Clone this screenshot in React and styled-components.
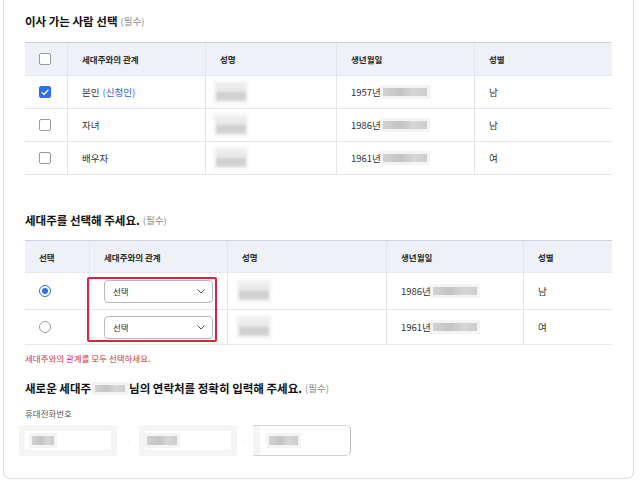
import React from "react";
import styled, { createGlobalStyle } from "styled-components";

const GlobalStyle = createGlobalStyle`
  html, body {
    margin: 0;
    padding: 0;
    background: #ffffff;
  }
  body {
    font-family: "Noto Sans CJK KR", "Noto Sans", sans-serif;
    color: #333;
  }
`;

const movers = [
  { relation: "본인", applicant: true, year: "1957년", gender: "남", checked: true },
  { relation: "자녀", year: "1986년", gender: "남" },
  { relation: "배우자", year: "1961년", gender: "여" },
];

const heads = [
  { year: "1986년", gender: "남", selected: true },
  { year: "1961년", gender: "여" },
];

const Page = styled.div`
  padding: 0 10px 3px 3px;
`;

const Card = styled.section`
  border: 1px solid #dcdcdc;
  border-top: none;
  border-radius: 0 0 7px 7px;
  padding: 12px 21px 22px 21px;
`;

const Title = styled.h2`
  margin: 0;
  display: flex;
  align-items: center;
  font-size: 11.5px;
  line-height: 18px;
  font-weight: 700;
  color: #111;
`;

const Required = styled.span`
  margin-left: 3px;
  font-size: 9.5px;
  font-weight: 400;
  color: #8a8a8a;
`;

const Table = styled.div`
  display: grid;
  grid-template-columns: ${(p) => p.$cols};
  grid-template-rows: ${(p) => p.$rows};
  width: 587px;
  margin-top: ${(p) => p.$top}px;
  border-top: 1px solid #cdd3db;
`;

const Cell = styled.div`
  display: flex;
  align-items: center;
  padding: 0 14px;
  font-size: ${(p) => (p.$head ? "8.5px" : "9.5px")};
  font-weight: ${(p) => (p.$head ? 700 : 400)};
  color: ${(p) => (p.$head ? "#2b2b2b" : "#333")};
  background: ${(p) => (p.$head ? "#eef1f6" : "#fff")};
  border-bottom: 1px solid #e3e6ea;
  border-left: ${(p) => (p.$first ? "none" : "1px solid #e3e6ea")};
  white-space: nowrap;
  grid-row: ${(p) => p.$row};
  grid-column: ${(p) => p.$col};
`;

const Applicant = styled.span`
  margin-left: 3px;
  color: #2d6bc9;
`;

const Check = styled.span`
  box-sizing: border-box;
  width: 12px;
  height: 12px;
  border-radius: 2px;
  border: 1px solid ${(p) => (p.$on ? "#2f6fe0" : "#9a9a9a")};
  background: ${(p) => (p.$on ? "#2f6fe0" : "#fff")};
  display: flex;
  align-items: center;
  justify-content: center;
`;

const Radio = styled.span`
  box-sizing: border-box;
  width: 12px;
  height: 12px;
  border-radius: 50%;
  border: 1px solid ${(p) => (p.$on ? "#2f6fe0" : "#9a9a9a")};
  background: #fff;
  display: flex;
  align-items: center;
  justify-content: center;
  &::after {
    content: "";
    display: ${(p) => (p.$on ? "block" : "none")};
    width: 6px;
    height: 6px;
    border-radius: 50%;
    background: #2f6fe0;
  }
`;

const Blur = styled.span`
  display: inline-block;
  width: ${(p) => p.$w}px;
  height: ${(p) => p.$h}px;
  background: linear-gradient(180deg, #f0f0f0 0%, #e6e6e6 45%, #cdcdcd 60%, #d8d8d8 100%);
  box-shadow: 0 0 0 3px #f7f7f7;
  filter: blur(0.8px);
`;

const Bar = styled.span`
  display: inline-block;
  flex-shrink: 0;
  width: ${(p) => p.$w}px;
  height: ${(p) => p.$h || 8}px;
  margin: 0 ${(p) => p.$mr || 0}px 0 ${(p) => p.$ml || 0}px;
  background: linear-gradient(90deg, #d2d2d2, #c4c4c4 40%, #d6d6d6 70%, #cdcdcd);
  box-shadow: 0 0 0 3px #f4f4f4;
  filter: blur(0.6px);
`;

const Select = styled.div`
  box-sizing: border-box;
  width: 111px;
  height: 23px;
  border: 1px solid #b9b9b9;
  border-radius: 4px;
  background: #fff;
  display: flex;
  align-items: center;
  justify-content: space-between;
  padding: 0 7px 0 8px;
  font-size: 8.5px;
  font-weight: 400;
  color: #333;
`;

const Highlight = styled.div`
  grid-column: 2;
  grid-row: 2 / span 2;
  margin: 4px 10px 3px -2px;
  border: 2px solid #d5263b;
  border-radius: 2px;
  pointer-events: none;
  z-index: 1;
`;

const ErrorText = styled.p`
  margin: 6px 0 0;
  font-size: 8.5px;
  line-height: 14px;
  color: #cf3349;
`;

const Label = styled.div`
  margin-top: 9px;
  font-size: 8.5px;
  line-height: 14px;
  color: #555;
`;

const PhoneRow = styled.div`
  display: flex;
  align-items: center;
  margin: 5px 0 0 -6px;
`;

const Field = styled.div`
  box-sizing: border-box;
  width: 98px;
  height: 31px;
  display: flex;
  align-items: center;
  padding-left: ${(p) => p.$pad}px;
  background: #fff;
  border: 6px solid #f5f5f5;
  border-radius: 2px;
  ${(p) =>
    p.$edge &&
    `
    border: 1px solid #f5f5f5;
    border-right-color: #bdbdbd;
    border-top-color: #d4d4d4;
    border-bottom-color: #d4d4d4;
    border-radius: 0 5px 5px 0;
    box-shadow: inset 6px 0 0 #f5f5f5;
  `}
`;

const Dash = styled.span`
  width: ${(p) => p.$w}px;
  text-align: center;
  font-size: 9px;
  color: #e2e2e2;
`;

const Spacer = styled.div`
  height: ${(p) => p.$h}px;
`;

const Chevron = () => (
  <svg width="8" height="5" viewBox="0 0 8 5" fill="none">
    <path d="M0.8 0.8L4 4L7.2 0.8" stroke="#555" strokeWidth="1" strokeLinecap="round" strokeLinejoin="round" />
  </svg>
);

const Tick = () => (
  <svg width="8" height="7" viewBox="0 0 8 7" fill="none">
    <path d="M1 3.6L3 5.5L7 1.2" stroke="#fff" strokeWidth="1.3" strokeLinecap="round" strokeLinejoin="round" />
  </svg>
);

export default function App() {
  return (
    <Page>
      <GlobalStyle />
      <Card>
        <Title>
          이사 가는 사람 선택<Required>(필수)</Required>
        </Title>
        <Table $cols="42px 138px 131px 138px 138px" $rows="33px repeat(3, 33px)" $top={12}>
          <Cell $head $first $row={1} $col={1}>
            <Check />
          </Cell>
          <Cell $head $row={1} $col={2}>세대주와의 관계</Cell>
          <Cell $head $row={1} $col={3}>성명</Cell>
          <Cell $head $row={1} $col={4}>생년월일</Cell>
          <Cell $head $row={1} $col={5}>성별</Cell>
          {movers.map((m, i) => (
            <React.Fragment key={m.relation}>
              <Cell $first $row={i + 2} $col={1}>
                <Check $on={m.checked}>{m.checked && <Tick />}</Check>
              </Cell>
              <Cell $row={i + 2} $col={2}>
                {m.relation}
                {m.applicant && <Applicant>(신청인)</Applicant>}
              </Cell>
              <Cell $row={i + 2} $col={3} style={{ paddingLeft: 10 }}>
                <Blur $w={30} $h={18} />
              </Cell>
              <Cell $row={i + 2} $col={4}>
                {m.year}
                <Bar $w={44} $ml={2} />
              </Cell>
              <Cell $row={i + 2} $col={5}>{m.gender}</Cell>
            </React.Fragment>
          ))}
        </Table>

        <Spacer $h={36} />
        <Title>
          세대주를 선택해 주세요.<Required>(필수)</Required>
        </Title>
        <Table $cols="64px 138px 159px 137px 89px" $rows="32px 37px 35px" $top={11}>
          <Cell $head $first $row={1} $col={1}>선택</Cell>
          <Cell $head $row={1} $col={2}>세대주와의 관계</Cell>
          <Cell $head $row={1} $col={3}>성명</Cell>
          <Cell $head $row={1} $col={4}>생년월일</Cell>
          <Cell $head $row={1} $col={5}>성별</Cell>
          {heads.map((h, i) => (
            <React.Fragment key={h.year}>
              <Cell $first $row={i + 2} $col={1}>
                <Radio $on={h.selected} />
              </Cell>
              <Cell $row={i + 2} $col={2}>
                <Select>
                  선택
                  <Chevron />
                </Select>
              </Cell>
              <Cell $row={i + 2} $col={3} style={{ paddingLeft: 11 }}>
                <Blur $w={30} $h={18} />
              </Cell>
              <Cell $row={i + 2} $col={4}>
                {h.year}
                <Bar $w={44} $ml={2} />
              </Cell>
              <Cell $row={i + 2} $col={5}>{h.gender}</Cell>
            </React.Fragment>
          ))}
          <Highlight />
        </Table>
        <ErrorText>세대주와의 관계를 모두 선택하세요.</ErrorText>

        <Spacer $h={14} />
        <Title>
          새로운 세대주<Bar $w={30} $h={7} $ml={4} $mr={4} />님의 연락처를 정확히 입력해 주세요.
          <Required>(필수)</Required>
        </Title>
        <Label>휴대전화번호</Label>
        <PhoneRow>
          <Field $pad={7}>
            <Bar $w={22} $h={9} />
          </Field>
          <Dash $w={22}>-</Dash>
          <Field $pad={2}>
            <Bar $w={30} $h={9} />
          </Field>
          <Dash $w={16}>-</Dash>
          <Field $edge $pad={15}>
            <Bar $w={29} $h={9} />
          </Field>
        </PhoneRow>
      </Card>
    </Page>
  );
}
